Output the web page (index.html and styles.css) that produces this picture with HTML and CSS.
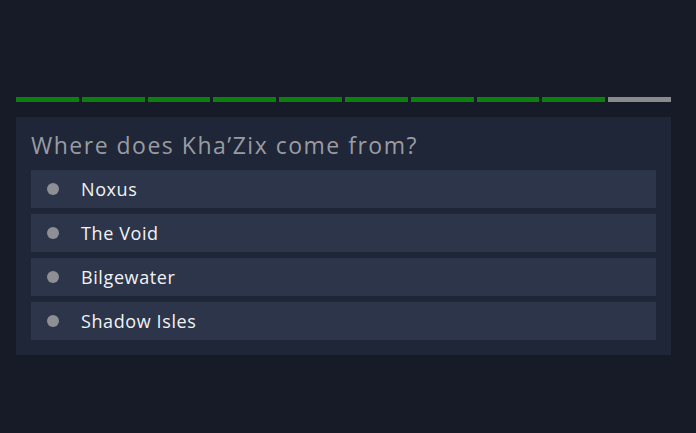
FILE: index.html
```html
<!DOCTYPE html>
<html>
	<head>
		<title>Quiz</title>
		<meta charset="utf-8" />
		<link rel="stylesheet" href="styles.css">
	</head>
	<body>
		<div id="quiz">
			<div id="progress">
				<div class="step done"></div>
				<div class="step done"></div>
				<div class="step done"></div>
				<div class="step done"></div>
				<div class="step done"></div>
				<div class="step done"></div>
				<div class="step done"></div>
				<div class="step done"></div>
				<div class="step done"></div>
				<div class="step"></div>
			</div>
			<div id="card">
				<div id="question">Where does Kha’Zix come from?</div>
				<div class="answer"><span class="dot"></span>Noxus</div>
				<div class="answer"><span class="dot"></span>The Void</div>
				<div class="answer"><span class="dot"></span>Bilgewater</div>
				<div class="answer"><span class="dot"></span>Shadow Isles</div>
			</div>
		</div>
	</body>
</html>
```

FILE: styles.css
```css
*{ box-sizing: border-box; }
body{ margin: 0; background: #161b27; font-family: "Open Sans", sans-serif; }
#quiz{ padding: 97px 25px 0 16px; }
#progress{ display: flex; gap: 3px; }
.step{ flex: 1; height: 5px; background: #8a8a8e; }
.step.done{ background: #0b800f; }
#card{
	margin-top: 15px;
	padding: 12px 15px 15px;
	background: #1e2638;
}
#question{
	color: #9a9ca2; font-size: 23px; line-height: 32px;
	letter-spacing: 1.5px;
	margin-bottom: 9px;
}
.answer{
	display: flex; align-items: center;
	height: 38px; margin-top: 6px;
	background: #2c3549; color: #f2f3f5;
	font-size: 18px; letter-spacing: 0.6px;
}
.answer:first-of-type{ margin-top: 0; }
.dot{
	width: 12px; height: 12px; border-radius: 50%;
	background: #8d8f95; margin: 0 22px 0 16px;
}
```
